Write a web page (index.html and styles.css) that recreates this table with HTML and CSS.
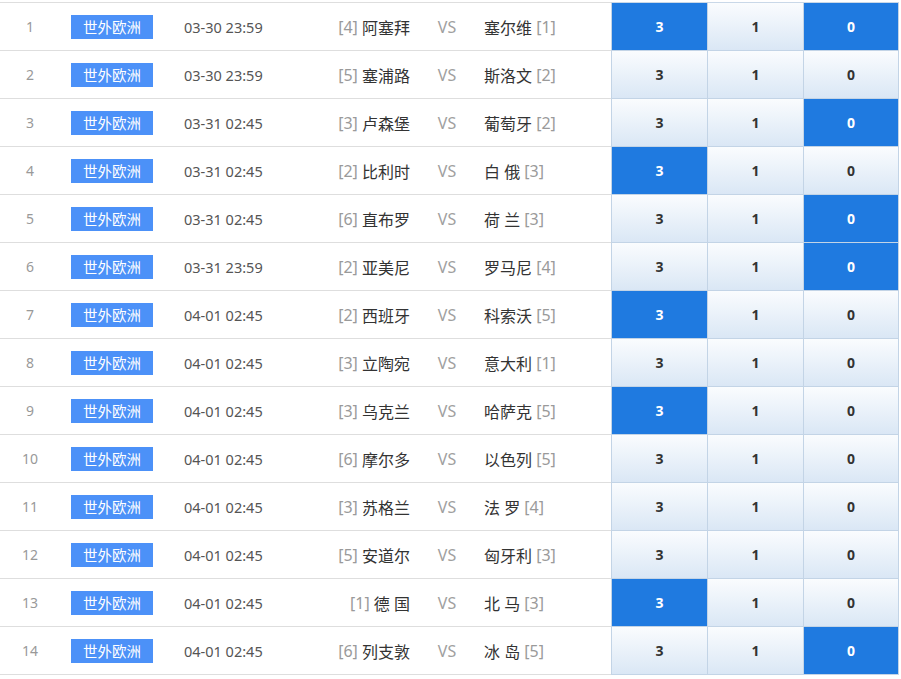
FILE: index.html
```html
<!DOCTYPE html>
<html lang="zh-CN">
<head>
<meta charset="utf-8">
<title>世外欧洲</title>
<link rel="stylesheet" href="styles.css">
</head>
<body>
<div class="list">
  <div class="row"><span class="idx">1</span><span class="lg"><span class="badge">世外欧洲</span></span><span class="time">03-30 23:59</span><span class="home"><i>[4]</i> 阿塞拜</span><span class="vs">VS</span><span class="away">塞尔维 <i>[1]</i></span><span class="sc on">3</span><span class="sc">1</span><span class="sc last on">0</span></div>
  <div class="row"><span class="idx">2</span><span class="lg"><span class="badge">世外欧洲</span></span><span class="time">03-30 23:59</span><span class="home"><i>[5]</i> 塞浦路</span><span class="vs">VS</span><span class="away">斯洛文 <i>[2]</i></span><span class="sc">3</span><span class="sc">1</span><span class="sc last">0</span></div>
  <div class="row"><span class="idx">3</span><span class="lg"><span class="badge">世外欧洲</span></span><span class="time">03-31 02:45</span><span class="home"><i>[3]</i> 卢森堡</span><span class="vs">VS</span><span class="away">葡萄牙 <i>[2]</i></span><span class="sc">3</span><span class="sc">1</span><span class="sc last on">0</span></div>
  <div class="row"><span class="idx">4</span><span class="lg"><span class="badge">世外欧洲</span></span><span class="time">03-31 02:45</span><span class="home"><i>[2]</i> 比利时</span><span class="vs">VS</span><span class="away">白 俄 <i>[3]</i></span><span class="sc on">3</span><span class="sc">1</span><span class="sc last">0</span></div>
  <div class="row"><span class="idx">5</span><span class="lg"><span class="badge">世外欧洲</span></span><span class="time">03-31 02:45</span><span class="home"><i>[6]</i> 直布罗</span><span class="vs">VS</span><span class="away">荷 兰 <i>[3]</i></span><span class="sc">3</span><span class="sc">1</span><span class="sc last on">0</span></div>
  <div class="row"><span class="idx">6</span><span class="lg"><span class="badge">世外欧洲</span></span><span class="time">03-31 23:59</span><span class="home"><i>[2]</i> 亚美尼</span><span class="vs">VS</span><span class="away">罗马尼 <i>[4]</i></span><span class="sc">3</span><span class="sc">1</span><span class="sc last on">0</span></div>
  <div class="row"><span class="idx">7</span><span class="lg"><span class="badge">世外欧洲</span></span><span class="time">04-01 02:45</span><span class="home"><i>[2]</i> 西班牙</span><span class="vs">VS</span><span class="away">科索沃 <i>[5]</i></span><span class="sc on">3</span><span class="sc">1</span><span class="sc last">0</span></div>
  <div class="row"><span class="idx">8</span><span class="lg"><span class="badge">世外欧洲</span></span><span class="time">04-01 02:45</span><span class="home"><i>[3]</i> 立陶宛</span><span class="vs">VS</span><span class="away">意大利 <i>[1]</i></span><span class="sc">3</span><span class="sc">1</span><span class="sc last">0</span></div>
  <div class="row"><span class="idx">9</span><span class="lg"><span class="badge">世外欧洲</span></span><span class="time">04-01 02:45</span><span class="home"><i>[3]</i> 乌克兰</span><span class="vs">VS</span><span class="away">哈萨克 <i>[5]</i></span><span class="sc on">3</span><span class="sc">1</span><span class="sc last">0</span></div>
  <div class="row"><span class="idx">10</span><span class="lg"><span class="badge">世外欧洲</span></span><span class="time">04-01 02:45</span><span class="home"><i>[6]</i> 摩尔多</span><span class="vs">VS</span><span class="away">以色列 <i>[5]</i></span><span class="sc">3</span><span class="sc">1</span><span class="sc last">0</span></div>
  <div class="row"><span class="idx">11</span><span class="lg"><span class="badge">世外欧洲</span></span><span class="time">04-01 02:45</span><span class="home"><i>[3]</i> 苏格兰</span><span class="vs">VS</span><span class="away">法 罗 <i>[4]</i></span><span class="sc">3</span><span class="sc">1</span><span class="sc last">0</span></div>
  <div class="row"><span class="idx">12</span><span class="lg"><span class="badge">世外欧洲</span></span><span class="time">04-01 02:45</span><span class="home"><i>[5]</i> 安道尔</span><span class="vs">VS</span><span class="away">匈牙利 <i>[3]</i></span><span class="sc">3</span><span class="sc">1</span><span class="sc last">0</span></div>
  <div class="row"><span class="idx">13</span><span class="lg"><span class="badge">世外欧洲</span></span><span class="time">04-01 02:45</span><span class="home"><i>[1]</i> 德 国</span><span class="vs">VS</span><span class="away">北 马 <i>[3]</i></span><span class="sc on">3</span><span class="sc">1</span><span class="sc last">0</span></div>
  <div class="row"><span class="idx">14</span><span class="lg"><span class="badge">世外欧洲</span></span><span class="time">04-01 02:45</span><span class="home"><i>[6]</i> 列支敦</span><span class="vs">VS</span><span class="away">冰 岛 <i>[5]</i></span><span class="sc">3</span><span class="sc">1</span><span class="sc last on">0</span></div>
</div>
</body>
</html>
```
FILE: styles.css
```css
html, body {
  margin: 0;
  padding: 0;
  background: #fff;
}
body {
  font-family: "Noto Sans", "Noto Sans CJK SC", sans-serif;
  color: #333;
}
.list {
  padding-top: 2px;
  width: 899px;
}
.row {
  display: grid;
  grid-template-columns: 60px 124px 136px 100px 54px 137px 96px 96px 96px;
  height: 48px;
  box-sizing: border-box;
}
.row:first-child {
  height: 49px;
}
.row > span {
  display: flex;
  align-items: center;
  border-bottom: 1px solid #dedede;
  box-sizing: border-box;
}
.row:first-child > span {
  border-top: 1px solid #dedede;
}
.idx {
  justify-content: center;
  font-size: 14px;
  color: #999;
}
.lg {
  padding-left: 11px;
}
.badge {
  display: flex;
  align-items: center;
  justify-content: center;
  width: 82px;
  height: 24px;
  background: #4c91f8;
  color: #fff;
  font-family: "Noto Sans CJK SC", sans-serif;
  font-size: 14.5px;
}
.time {
  font-size: 14.5px;
  color: #555;
}
.home {
  justify-content: flex-end;
  padding-right: 10px;
  font-size: 16px;
  white-space: pre;
}
.away {
  padding-left: 10px;
  font-size: 16px;
  white-space: pre;
}
.home i, .away i {
  font-style: normal;
  color: #9a9a9a;
}
.vs {
  justify-content: center;
  font-size: 16px;
  color: #a0a0a0;
}
.row > .sc {
  justify-content: center;
  font-size: 14px;
  font-weight: bold;
  color: #333;
  border-left: 1px solid #c3d4e6;
  border-bottom: 1px solid #c3d4e6;
  background: linear-gradient(to bottom, #fafcfe 0%, #dae7f5 100%);
}
.row:first-child > .sc {
  border-top: 1px solid #c9d8e8;
}
.row > .sc.last {
  border-right: 1px solid #c3d4e6;
}
.row > .sc.on {
  background: #1f7ae0;
  color: #fff;
}
```
